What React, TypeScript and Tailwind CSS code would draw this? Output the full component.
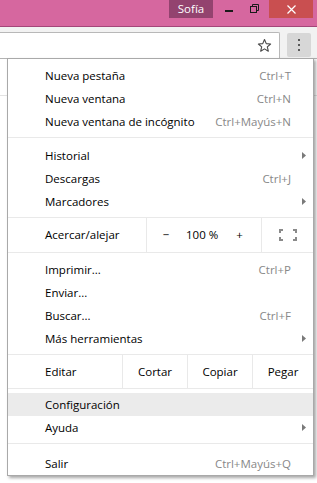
import React from "react";

const FONT = { fontFamily: "'Open Sans', 'Noto Sans', sans-serif" };

function Row({
  label,
  shortcut,
  arrow,
  highlight,
}: {
  label: string;
  shortcut?: string;
  arrow?: boolean;
  highlight?: boolean;
}) {
  return (
    <div
      className={
        "relative flex h-[23px] items-center whitespace-nowrap pl-[37px] pr-[22px] text-[11.5px] text-black " +
        (highlight ? "bg-[#ebebeb]" : "")
      }
    >
      <span className="flex-1">{label}</span>
      {shortcut && <span className="text-[#888888]">{shortcut}</span>}
      {arrow && (
        <svg
          className="absolute right-[7px] top-[8px]"
          width="4"
          height="7"
          viewBox="0 0 4 7"
        >
          <path d="M0 0 L4 3.5 L0 7 Z" fill="#7a7a7a" />
        </svg>
      )}
    </div>
  );
}

function Sep({ top = 4, bottom = 6 }: { top?: number; bottom?: number }) {
  return (
    <div style={{ paddingTop: top, paddingBottom: bottom }}>
      <div className="h-px bg-[#e9e9e9]" />
    </div>
  );
}

export default function App() {
  return (
    <div
      className="relative h-[483px] w-[317px] overflow-hidden bg-white"
      style={FONT}
    >
      {/* title bar */}
      <div className="flex h-[27px] items-start border-b border-[#a34679] bg-[#d6679f]">
        <div className="ml-[169px] flex h-[18px] w-[44px] items-center justify-center bg-[#93436f] text-[11.5px] text-white">
          Sofía
        </div>
        <div className="ml-[12px] mt-[10px] h-[2px] w-[8px] bg-[#1a1a1a]" />
        <svg
          className="ml-[17px] mt-[4px]"
          width="9"
          height="9"
          viewBox="0 0 9 9"
        >
          <path d="M2.5 2.5 V0.5 H8.5 V6.5 H6.5" fill="none" stroke="#1a1a1a" />
          <rect x="0.5" y="2.5" width="6" height="6" fill="none" stroke="#1a1a1a" />
        </svg>
        <div className="ml-[10px] flex h-[18px] w-[44px] items-center justify-center bg-[#c94f50]">
          <svg width="9" height="9" viewBox="0 0 9 9">
            <path d="M0.5 0.5 L8.5 8.5 M8.5 0.5 L0.5 8.5" stroke="white" strokeWidth="1.2" />
          </svg>
        </div>
      </div>

      {/* toolbar */}
      <div className="flex h-[32px] items-start border-b border-[#b3b3b3] bg-[#f2f2f2] pt-[5px]">
        <div className="flex h-[26px] w-[280px] items-center justify-end rounded-tr-[2px] border-r border-t border-[#b8b8b8] bg-white pr-[7px]">
          <svg width="15" height="15" viewBox="0 0 24 24">
            <path
              d="M12 2.5 L14.8 9 L21.8 9.6 L16.5 14.2 L18.1 21.1 L12 17.4 L5.9 21.1 L7.5 14.2 L2.2 9.6 L9.2 9 Z"
              fill="none"
              stroke="#4a4a4a"
              strokeWidth="1.8"
              strokeLinejoin="round"
            />
          </svg>
        </div>
        <div className="ml-[7px] mt-[1px] flex h-[24px] w-[24px] flex-col items-center justify-center gap-[3px] rounded-[2px] bg-[#d7d7d7]">
          <div className="h-[2px] w-[2px] bg-[#5a5a5a]" />
          <div className="h-[2px] w-[2px] bg-[#5a5a5a]" />
          <div className="h-[2px] w-[2px] bg-[#5a5a5a]" />
        </div>
      </div>

      {/* page */}
      <div className="h-[37px] w-full border-b border-[#e3e3e3]" />

      {/* menu */}
      <div className="absolute left-[7px] top-[58px] w-[307px] border border-[#a9a9a9] bg-white pt-[5px] pb-[0px] shadow-[2px_2px_3px_rgba(0,0,0,0.35)]">
        <Row label="Nueva pestaña" shortcut="Ctrl+T" />
        <Row label="Nueva ventana" shortcut="Ctrl+N" />
        <Row label="Nueva ventana de incógnito" shortcut="Ctrl+Mayús+N" />
        <Sep />
        <Row label="Historial" arrow />
        <Row label="Descargas" shortcut="Ctrl+J" />
        <Row label="Marcadores" arrow />
        <div className="pt-[4px]">
          <div className="h-px bg-[#e9e9e9]" />
        </div>
        <div className="flex h-[34px] items-stretch whitespace-nowrap text-[11.5px] text-black">
          <div className="flex w-[138px] items-center pl-[37px]">Acercar/alejar</div>
          <div className="flex w-[115px] items-center border-l border-[#e9e9e9]">
            <span className="ml-[15px] w-[8px] text-center">−</span>
            <span className="ml-[16px]">100 %</span>
            <span className="ml-[18px]">+</span>
          </div>
          <div className="flex flex-1 items-center justify-center border-l border-[#e9e9e9]">
            <svg width="18" height="12" viewBox="0 0 18 12">
              <path
                d="M1 4 V1 H4 M14 1 H17 V4 M17 8 V11 H14 M4 11 H1 V8"
                fill="none"
                stroke="#8a8a8a"
                strokeWidth="2"
              />
            </svg>
          </div>
        </div>
        <div className="pb-[5px]">
          <div className="h-px bg-[#e9e9e9]" />
        </div>
        <Row label="Imprimir..." shortcut="Ctrl+P" />
        <Row label="Enviar..." />
        <Row label="Buscar..." shortcut="Ctrl+F" />
        <Row label="Más herramientas" arrow />
        <div className="pt-[4px]">
          <div className="h-px bg-[#e9e9e9]" />
        </div>
        <div className="flex h-[33px] items-stretch whitespace-nowrap text-[11.5px] text-black">
          <div className="flex w-[114px] items-center pl-[37px]">Editar</div>
          <div className="flex w-[65px] items-center justify-center border-l border-[#e9e9e9]">Cortar</div>
          <div className="flex w-[65px] items-center justify-center border-l border-[#e9e9e9]">Copiar</div>
          <div className="flex flex-1 items-center justify-center border-l border-[#e9e9e9]">Pegar</div>
        </div>
        <div className="pb-[4px]">
          <div className="h-px bg-[#e9e9e9]" />
        </div>
        <Row label="Configuración" highlight />
        <Row label="Ayuda" arrow />
        <Sep top={4} bottom={8} />
        <Row label="Salir" shortcut="Ctrl+Mayús+Q" />
      </div>
    </div>
  );
}
